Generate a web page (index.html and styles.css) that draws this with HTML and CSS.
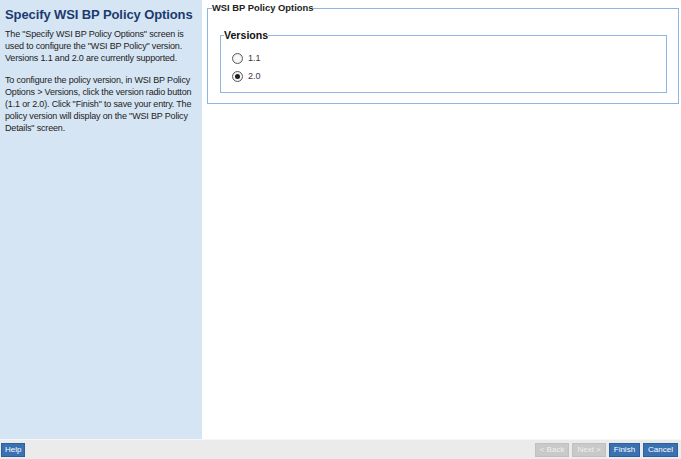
FILE: index.html
```html
<!DOCTYPE html>
<html>
<head>
<meta charset="utf-8">
<link rel="stylesheet" href="styles.css">
</head>
<body>
<div class="page">
  <div class="main">
    <aside class="help-panel">
      <h1 class="help-title">Specify WSI BP Policy Options</h1>
      <p class="help-text">The "Specify WSI BP Policy Options" screen is used to configure the "WSI BP Policy" version. Versions 1.1 and 2.0 are currently supported.</p>
      <p class="help-text">To configure the policy version, in WSI BP Policy Options &gt; Versions, click the version radio button (1.1 or 2.0). Click "Finish" to save your entry. The policy version will display on the "WSI BP Policy Details" screen.</p>
    </aside>
    <section class="content">
      <fieldset class="outer-set">
        <legend class="outer-legend">WSI BP Policy Options</legend>
        <fieldset class="inner-set">
          <legend class="inner-legend">Versions</legend>
          <label class="radio-row"><input type="radio" name="ver" class="radio"><span>1.1</span></label>
          <label class="radio-row"><input type="radio" name="ver" class="radio" checked><span>2.0</span></label>
        </fieldset>
      </fieldset>
    </section>
  </div>
  <footer class="footer">
    <button class="btn btn-active btn-help">Help</button>
    <div class="nav-btns">
      <button class="btn btn-disabled">&lt; Back</button>
      <button class="btn btn-disabled">Next &gt;</button>
      <button class="btn btn-active">Finish</button>
      <button class="btn btn-active">Cancel</button>
    </div>
  </footer>
</div>
</body>
</html>
```
FILE: styles.css
```css
html, body {
  margin: 0;
  padding: 0;
  background: #ffffff;
}
body {
  font-family: "Liberation Sans", Arial, sans-serif;
}
.page {
  width: 681px;
  height: 459px;
  display: flex;
  flex-direction: column;
}
.main {
  flex: 1;
  display: flex;
  min-height: 0;
}
.help-panel {
  width: 203px;
  box-sizing: border-box;
  background: #d6e5f4;
  padding: 6px 4px 0 5px;
  border-right: 1px solid #ffffff;
}
.help-title {
  margin: 0 0 5px 0;
  font-size: 13px;
  letter-spacing: -0.1px;
  font-weight: bold;
  color: #1b3b6f;
  line-height: 17px;
  white-space: nowrap;
}
.help-text {
  margin: 0 0 10px 0;
  font-size: 9px;
  letter-spacing: -0.17px;
  line-height: 12px;
  color: #222222;
}
.content {
  flex: 1;
  padding: 2px 2px 0 4px;
}
.outer-set {
  margin: 0;
  padding: 15px 11px 10px 3px;
  border: 1px solid #8db6e2;
}
.outer-legend {
  padding: 0;
  margin-left: 1px;
  font-size: 9.4px;
  font-weight: bold;
  color: #222222;
  line-height: 12px;
}
.inner-set {
  margin: 0 0 0 9px;
  padding: 9px 10px 9px 11px;
  border: 1px solid #8db6e2;
  display: flex;
  flex-direction: column;
  gap: 4px;
}
.inner-legend {
  padding: 0;
  margin-left: -8px;
  font-size: 10.6px;
  font-weight: bold;
  color: #111111;
  line-height: 13px;
}
.radio-row {
  display: flex;
  align-items: center;
  gap: 5px;
  font-size: 9px;
  color: #44334a;
  height: 14px;
}
.radio {
  appearance: none;
  -webkit-appearance: none;
  margin: 0;
  width: 11px;
  height: 11px;
  border: 1px solid #5a5a5a;
  border-radius: 50%;
  background: radial-gradient(circle, #ffffff 0%, #f2f2f2 60%, #dcdcdc 100%);
  box-sizing: border-box;
  position: relative;
}
.radio:checked::after {
  content: "";
  position: absolute;
  left: 2px;
  top: 2px;
  width: 5px;
  height: 5px;
  border-radius: 50%;
  background: #1e1e1e;
}
.footer {
  height: 19px;
  background: #ebebeb;
  border-top: 1px solid #f6f6f6;
  display: flex;
  align-items: center;
  justify-content: space-between;
  padding: 0 3px 0 1px;
}
.nav-btns {
  display: flex;
  gap: 3px;
}
.btn {
  font-family: "Liberation Sans", Arial, sans-serif;
  font-size: 8px;
  height: 14px;
  padding: 0 4px;
  border: 1px solid transparent;
  line-height: 12px;
  cursor: pointer;
}
.btn-help {
  padding: 0 3px;
}
.btn-active {
  background: #3a71b2;
  color: #ffffff;
  border-color: #2d5f9c;
}
.btn-disabled {
  background: #c9c9c9;
  color: #f0f0f0;
  border-color: #c0c0c0;
}
```
